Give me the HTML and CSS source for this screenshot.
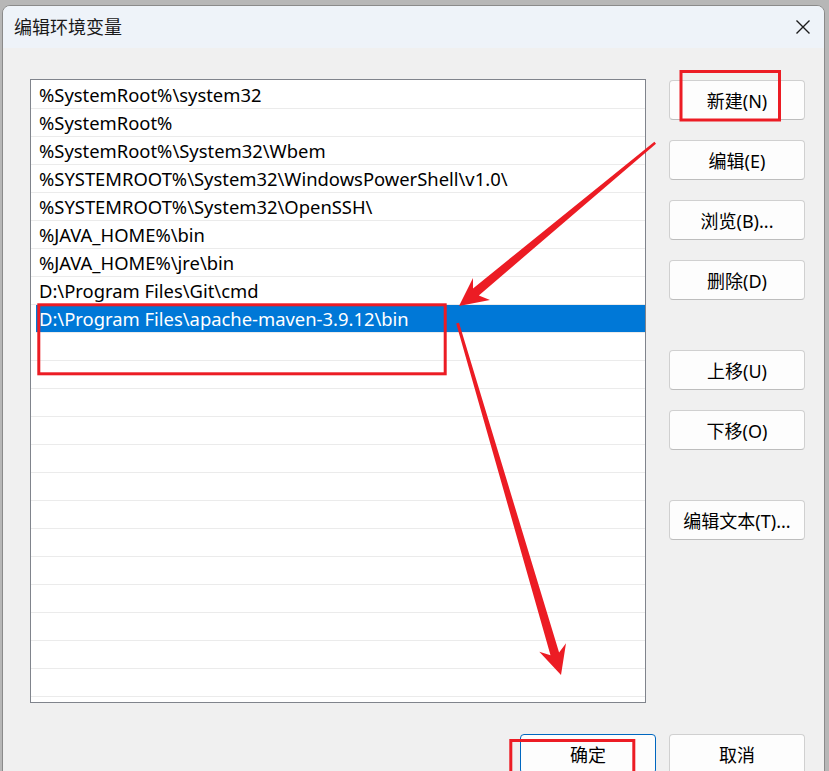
FILE: index.html
```html
<!DOCTYPE html>
<html lang="zh-CN">
<head>
  <meta charset="UTF-8" />
  <meta name="viewport" content="width=device-width, initial-scale=1.0">
  <title>编辑环境变量</title>
  <link rel="stylesheet" href="styles.css">
</head>
<body>

  <!-- Dialog window -->
  <div class="dialog">
    <div class="titlebar">
      <span class="title">编辑环境变量</span>
      <span class="close">
        <svg width="16" height="16" viewBox="0 0 16 16">
          <path d="M1.5 1.5 L14.5 14.5 M14.5 1.5 L1.5 14.5" stroke="#1b1b1b" stroke-width="1.4" fill="none"/>
        </svg>
      </span>
    </div>

    <div class="content">
      <div class="main">
        <!-- Path entries -->
        <ul class="pathlist">
          <li>%SystemRoot%\system32</li>
          <li>%SystemRoot%</li>
          <li>%SystemRoot%\System32\Wbem</li>
          <li>%SYSTEMROOT%\System32\WindowsPowerShell\v1.0\</li>
          <li>%SYSTEMROOT%\System32\OpenSSH\</li>
          <li>%JAVA_HOME%\bin</li>
          <li>%JAVA_HOME%\jre\bin</li>
          <li>D:\Program Files\Git\cmd</li>
          <li class="selected">D:\Program Files\apache-maven-3.9.12\bin</li>
          <li></li><li></li><li></li><li></li><li></li>
          <li></li><li></li><li></li><li></li><li></li>
          <li></li><li></li><li></li>
        </ul>

        <!-- Side actions -->
        <div class="side">
          <div class="group">
            <button class="btn">新建(N)</button>
            <button class="btn">编辑(E)</button>
            <button class="btn">浏览(B)...</button>
            <button class="btn">删除(D)</button>
          </div>
          <div class="group">
            <button class="btn">上移(U)</button>
            <button class="btn">下移(O)</button>
          </div>
          <div class="group">
            <button class="btn">编辑文本(T)...</button>
          </div>
        </div>
      </div>

      <div class="footer">
        <button class="btn default">确定</button>
        <button class="btn">取消</button>
      </div>
    </div>
  </div>

  <!-- Red markup drawn on top -->
  <svg class="marks" width="829" height="771" viewBox="0 0 829 771">
    <g fill="none" stroke="#ec1c24" stroke-width="3">
      <rect x="681" y="71.5" width="98.5" height="48.5"/>
      <rect x="38.8" y="304.8" width="406.4" height="69"/>
      <rect x="510.8" y="740.5" width="123" height="40"/>
    </g>
    <g fill="#ec1c24">
      <polygon points="656,143.8 478.8,295.4 490,300 459,306 473,278 473,288.4 654.4,141.8"/>
      <polygon points="459,322.8 559.1,652.6 566,643.3 561,675 539.3,651.7 550.5,655.2 456.2,323.6"/>
    </g>
  </svg>

</body>
</html>
```

FILE: styles.css
```css
html, body {
  margin: 0;
  height: 100%;
  overflow: hidden;
}

body {
  background: #b7b7b7;
  font-family: "Noto Sans", "Noto Sans CJK SC", sans-serif;
  font-size: 18px;
  color: #000;
  position: relative;
}

.dialog {
  margin: 5px 4px 0 2px;
  width: 823px;
  height: 780px;
  box-sizing: border-box;
  border: 1px solid #8a8a8a;
  border-radius: 8px 8px 0 0;
  background: #f0f0f0;
  overflow: hidden;
}

.titlebar {
  height: 42px;
  background: #eef3f9;
  display: flex;
  align-items: center;
  justify-content: space-between;
  padding: 0 13px 0 11px;
}

.title {
  font-family: "Noto Sans CJK SC", sans-serif;
  font-size: 18px;
  color: #1a1a1a;
  margin-top: -2px;
}

.close {
  display: flex;
  margin-top: -1px;
}

.content {
  padding: 31px 19px 0 27px;
}

.main {
  display: flex;
  gap: 23px;
}

.pathlist {
  list-style: none;
  margin: 0;
  padding: 1px 0 0;
  width: 616px;
  height: 624px;
  box-sizing: border-box;
  border: 1px solid #80848c;
  background: #fff;
  overflow: hidden;
  font-size: 18.4px;
}

.pathlist li {
  height: 27px;
  line-height: 28px;
  border-bottom: 1px solid #ebebeb;
  padding-left: 8px;
  white-space: nowrap;
}

.pathlist li.selected {
  margin-left: 5px;
  padding-left: 3px;
  background: #0078d7;
  color: #fff;
}

.side {
  display: flex;
  flex-direction: column;
  gap: 50px;
  padding-top: 1px;
}

.group {
  display: flex;
  flex-direction: column;
  gap: 20px;
}

.btn {
  width: 136px;
  height: 40px;
  box-sizing: border-box;
  background: #fdfdfd;
  border: 1px solid #d0d0d0;
  border-bottom-color: #bdbdbd;
  border-radius: 4px;
  font-family: "Noto Sans", "Noto Sans CJK SC", sans-serif;
  font-size: 18px;
  color: #000;
  padding: 0;
}

.btn.default {
  border: 1px solid #0067c0;
}

.footer {
  display: flex;
  justify-content: flex-end;
  gap: 13px;
  margin-top: 31px;
}

.marks {
  position: absolute;
  top: 0;
  left: 0;
  pointer-events: none;
}
```
